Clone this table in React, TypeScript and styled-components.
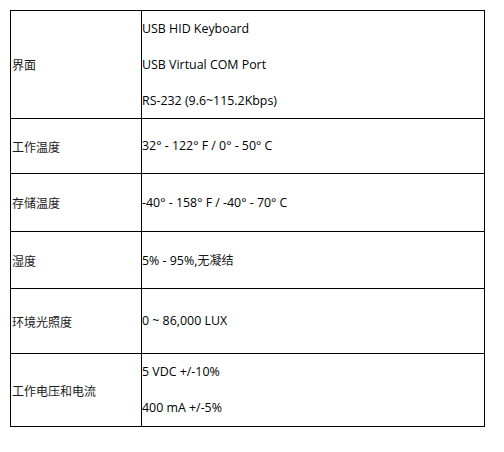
import React from "react";
import styled, { createGlobalStyle } from "styled-components";

const Global = createGlobalStyle`
  html, body { margin: 0; padding: 0; background: #ffffff; }
  body {
    font-family: "Open Sans", "Noto Sans CJK SC", sans-serif;
    color: #000000;
  }
`;

const Page = styled.div`
  padding: 10px;
`;

const Table = styled.div`
  display: grid;
  grid-template-columns: 131px 343px;
  width: 475px;
  border-top: 1px solid #000;
  border-left: 1px solid #000;
  box-sizing: border-box;
`;

const Cell = styled.div<{ $h: number }>`
  height: ${(p) => p.$h}px;
  box-sizing: border-box;
  border-right: 1px solid #000;
  border-bottom: 1px solid #000;
  display: flex;
  flex-direction: column;
  justify-content: center;
`;

const Label = styled(Cell)`
  padding-left: 1px;
  font-family: "Noto Sans CJK SC", sans-serif;
  font-size: 12px;
  color: #1a1a1a;
`;

const Line = styled.div`
  height: 36px;
  line-height: 36px;
  font-size: 12.4px;
  white-space: nowrap;
`;

const Cjk = styled.span`
  font-family: "Noto Sans CJK SC", sans-serif;
  font-size: 12px;
  color: #1a1a1a;
`;

type Row = { label: string; h: number; lines: React.ReactNode[] };

const rows: Row[] = [
  {
    label: "界面",
    h: 108,
    lines: ["USB HID Keyboard", "USB Virtual COM Port", "RS-232 (9.6~115.2Kbps)"],
  },
  { label: "工作温度", h: 55, lines: ["32° - 122° F / 0° - 50° C"] },
  { label: "存储温度", h: 58, lines: ["-40° - 158° F / -40° - 70° C"] },
  {
    label: "湿度",
    h: 57,
    lines: [
      <>
        5% - 95%,<Cjk>无凝结</Cjk>
      </>,
    ],
  },
  { label: "环境光照度", h: 65, lines: ["0 ~ 86,000 LUX"] },
  { label: "工作电压和电流", h: 73, lines: ["5 VDC +/-10%", "400 mA +/-5%"] },
];

export default function App() {
  return (
    <>
      <Global />
      <Page>
        <Table>
          {rows.map((r) => (
            <React.Fragment key={r.label}>
              <Label $h={r.h}>{r.label}</Label>
              <Cell $h={r.h}>
                {r.lines.map((l, i) => (
                  <Line key={i}>{l}</Line>
                ))}
              </Cell>
            </React.Fragment>
          ))}
        </Table>
      </Page>
    </>
  );
}
